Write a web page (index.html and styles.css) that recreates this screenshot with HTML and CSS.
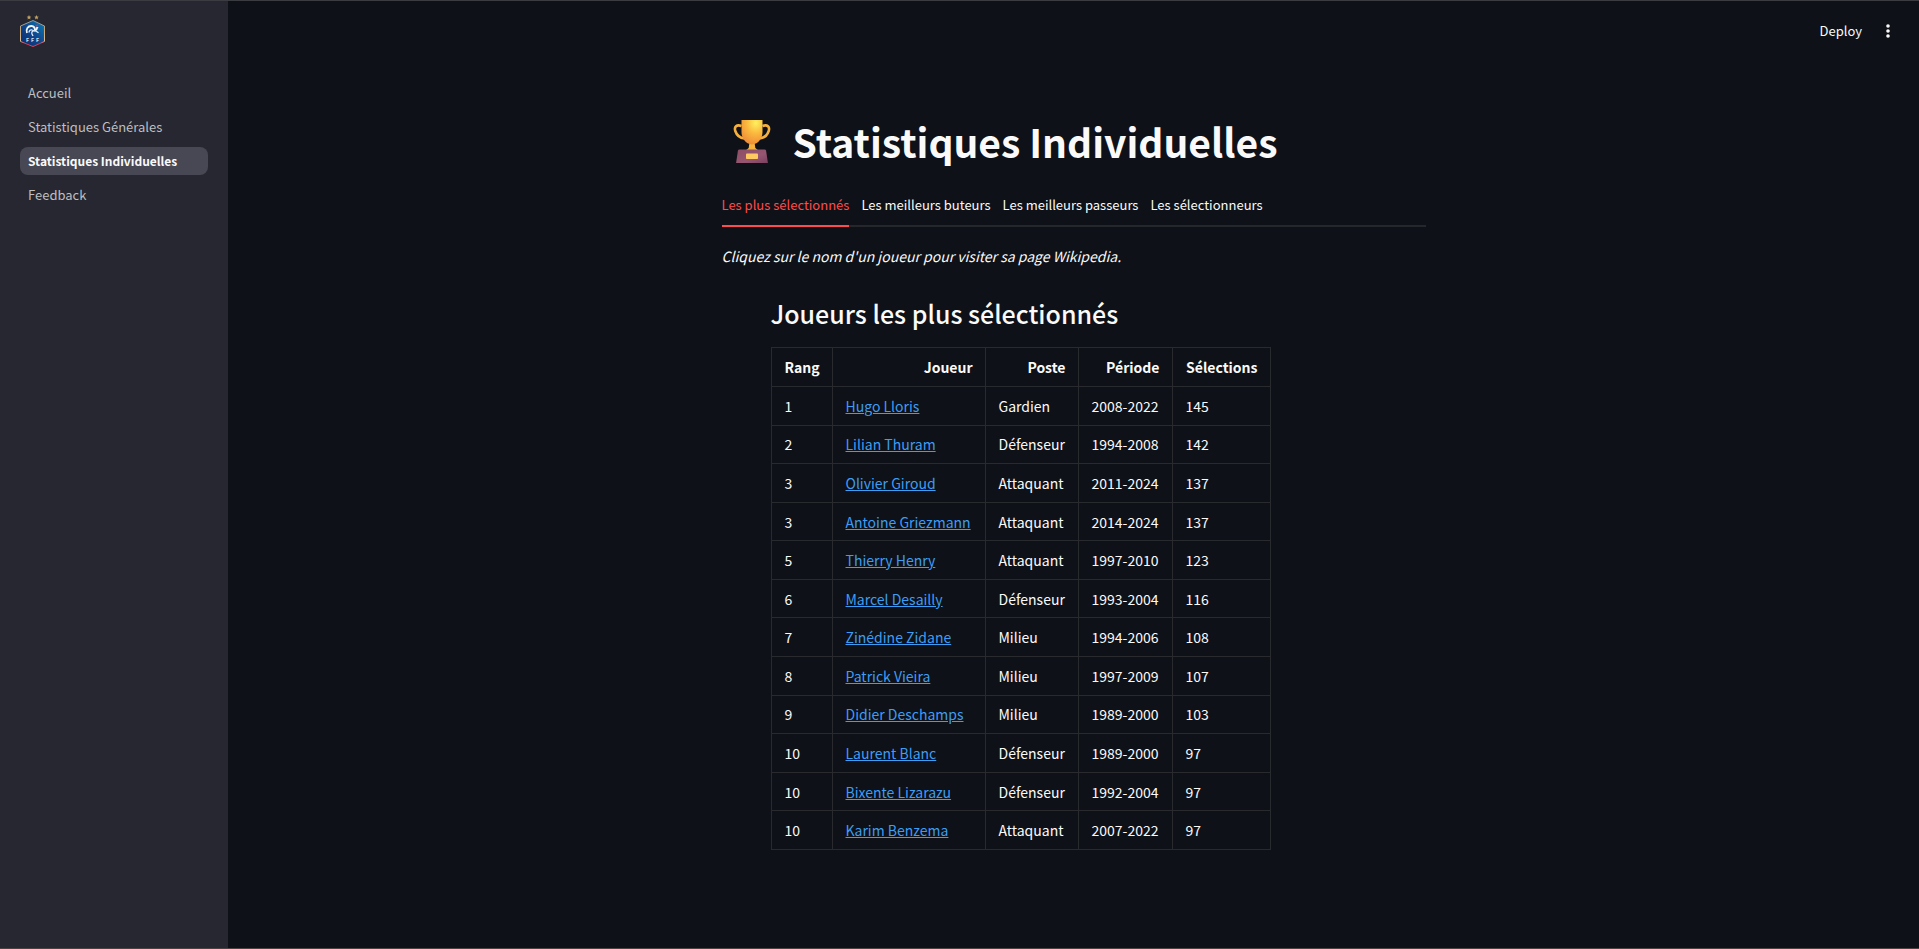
FILE: index.html
```html
<!DOCTYPE html>
<html lang="fr">
<head>
<meta charset="utf-8">
<meta name="viewport" content="width=device-width, initial-scale=1">
<title>Statistiques Individuelles</title>
<link rel="stylesheet" href="styles.css">
</head>
<body>
<div class="app">
  <aside class="sidebar">
    <a class="logo" href="#" aria-label="Accueil">
      <svg width="26" height="32" viewBox="0 0 26 32">
        <defs>
          <linearGradient id="shield" x1="0" y1="1" x2="1" y2="0"><stop offset="0" stop-color="#0c2a6a"/><stop offset=".5" stop-color="#10468c"/><stop offset="1" stop-color="#0b7fb8"/></linearGradient>
          <linearGradient id="rim" x1="0" y1="0" x2="0" y2="1"><stop offset="0" stop-color="#8a9aa0"/><stop offset=".4" stop-color="#c9a877"/><stop offset=".78" stop-color="#d8c0a0"/><stop offset=".88" stop-color="#dc3550"/><stop offset="1" stop-color="#e2405a"/></linearGradient>
        </defs>
        <path d="M9 0l.7 1.500 1.600.2-1.200 1.100.3 1.600L9 3.600l-1.400.8.3-1.600-1.200-1.100 1.600-.2zM16.500 0l.7 1.500 1.600.2-1.200 1.100.3 1.600-1.400-.8-1.400.8.3-1.600-1.200-1.100 1.600-.2z" fill="#c0a062"/>
        <path d="M13 5.500L24.500 11v15.500L13 31.500 .5 26.500V11z" fill="url(#shield)" stroke="url(#rim)"/>
        <path d="M7 18C5.500 14 8 10.800 11.500 11c2.500.1 3.500 2.500 3.500 4.500 1.300-.3 2-1.500 2.200-3.500" fill="none" stroke="#eef4fa" stroke-width="1.800"/>
        <path d="M9 17.500c0-2 1.500-3.200 3.500-2.500M15 15.500l3.500 2.300M14 15.500c-2 .5-2.500 1.700-2 3.500l1 2" fill="none" stroke="#e4edf6" stroke-width="1.300"/>
        <path d="M16.500 11.500l2.300.9-1.600.7z" fill="#eef4fa"/>
        <path d="M15.300 11l.3-1.600 1.200.5.8-.9.4 1.700-1.300.7z" fill="#d52c50"/>
        <text x="6 11 16" y="27" class="logo-text">FFF</text>
      </svg>
    </a>
    <nav class="nav">
      <a class="nav-item" href="#">Accueil</a>
      <a class="nav-item" href="#">Statistiques Générales</a>
      <a class="nav-item nav-item-active" href="#" aria-current="page">Statistiques Individuelles</a>
      <a class="nav-item" href="#">Feedback</a>
    </nav>
  </aside>
  <div class="page">
    <header class="toolbar">
      <button class="deploy" type="button">Deploy</button>
      <button class="menu" type="button" aria-label="Menu">
        <svg width="16" height="16" viewBox="0 0 16 16" fill="#fafafa"><circle cx="8" cy="3" r="1.800"/><circle cx="8" cy="8" r="1.800"/><circle cx="8" cy="13" r="1.800"/></svg>
      </button>
    </header>
    <main class="content">
      <h1 class="title">
        <svg class="trophy" width="44" height="44" viewBox="0 0 44 44" aria-hidden="true">
          <defs>
            <radialGradient id="cup" cx=".68" cy=".12" r=".95"><stop offset="0" stop-color="#fff05e"/><stop offset=".45" stop-color="#fbb93e"/><stop offset="1" stop-color="#ed8738"/></radialGradient>
            <linearGradient id="base" x1="0" y1="0" x2="1" y2="1"><stop offset="0" stop-color="#8d4d63"/><stop offset=".6" stop-color="#965671"/><stop offset="1" stop-color="#79405f"/></linearGradient>
          </defs>
          <path d="M10 7C5 5 2.500 8 3.800 12s4.700 7 9.200 7.500M31 7c5-2 7.500 1 6.200 5s-4.700 7-9.200 7.500" transform="translate(1.500 0)" fill="none" stroke="#f5af3d" stroke-width="2.600"/>
          <path d="M19.500 23h5l.8 6 3.200 2.500v2h-13v-2l3.200-2.500z" fill="#f6b43e"/>
          <path d="M11.500 1h21v12c0 6-4 12-10.500 12.500C15.500 25 11.500 19 11.500 13z" fill="url(#cup)"/>
          <path d="M9.500 30.500h25q1.300 0 1.600 1.300l1.800 12.200H6.100l1.800-12.200q.3-1.300 1.600-1.300z" fill="url(#base)"/>
          <rect x="16" y="34.500" width="12" height="5.500" rx=".8" fill="#fdc960"/>
        </svg>
        <span>Statistiques Individuelles</span>
      </h1>
      <div class="tabs" role="tablist">
        <button class="tab tab-active" role="tab" aria-selected="true" type="button">Les plus sélectionnés</button>
        <button class="tab" role="tab" aria-selected="false" type="button">Les meilleurs buteurs</button>
        <button class="tab" role="tab" aria-selected="false" type="button">Les meilleurs passeurs</button>
        <button class="tab" role="tab" aria-selected="false" type="button">Les sélectionneurs</button>
      </div>
      <p class="hint">Cliquez sur le nom d'un joueur pour visiter sa page Wikipedia.</p>
      <section class="ranking">
        <h2 class="subtitle">Joueurs les plus sélectionnés</h2>
        <table class="table">
          <colgroup><col class="col-rank"><col class="col-player"><col class="col-role"><col class="col-years"><col class="col-caps"></colgroup>
          <thead><tr><th>Rang</th><th>Joueur</th><th>Poste</th><th>Période</th><th>Sélections</th></tr></thead>
          <tbody>
            <tr><td>1</td><td><a href="#">Hugo Lloris</a></td><td>Gardien</td><td>2008-2022</td><td>145</td></tr>
            <tr><td>2</td><td><a href="#">Lilian Thuram</a></td><td>Défenseur</td><td>1994-2008</td><td>142</td></tr>
            <tr><td>3</td><td><a href="#">Olivier Giroud</a></td><td>Attaquant</td><td>2011-2024</td><td>137</td></tr>
            <tr><td>3</td><td><a href="#">Antoine Griezmann</a></td><td>Attaquant</td><td>2014-2024</td><td>137</td></tr>
            <tr><td>5</td><td><a href="#">Thierry Henry</a></td><td>Attaquant</td><td>1997-2010</td><td>123</td></tr>
            <tr><td>6</td><td><a href="#">Marcel Desailly</a></td><td>Défenseur</td><td>1993-2004</td><td>116</td></tr>
            <tr><td>7</td><td><a href="#">Zinédine Zidane</a></td><td>Milieu</td><td>1994-2006</td><td>108</td></tr>
            <tr><td>8</td><td><a href="#">Patrick Vieira</a></td><td>Milieu</td><td>1997-2009</td><td>107</td></tr>
            <tr><td>9</td><td><a href="#">Didier Deschamps</a></td><td>Milieu</td><td>1989-2000</td><td>103</td></tr>
            <tr><td>10</td><td><a href="#">Laurent Blanc</a></td><td>Défenseur</td><td>1989-2000</td><td>97</td></tr>
            <tr><td>10</td><td><a href="#">Bixente Lizarazu</a></td><td>Défenseur</td><td>1992-2004</td><td>97</td></tr>
            <tr><td>10</td><td><a href="#">Karim Benzema</a></td><td>Attaquant</td><td>2007-2022</td><td>97</td></tr>
          </tbody>
        </table>
      </section>
    </main>
  </div>
</div>
</body>
</html>
```
FILE: styles.css
```css
* { box-sizing: border-box; }

body {
  margin: 0;
  background: #0e1117;
  color: #fafafa;
  font-family: "Noto Sans CJK SC", "Noto Sans", sans-serif;
  font-size: 14px;
  line-height: 24px;
}

button {
  padding: 0;
  border: 0;
  background: none;
  color: inherit;
  font: inherit;
}

.app {
  display: flex;
  min-height: 100vh;
  border-top: 1px solid #3b3c41;
  border-bottom: 1px solid #4a4343;
}

.sidebar {
  flex: 0 0 228px;
  padding: 14px 20px;
  background: #262730;
}

.logo { display: block; height: 32px; }
.logo svg { display: block; }
.logo-text { font-size: 5px; font-weight: 700; fill: #dfe6f2; }

.nav {
  display: flex;
  flex-direction: column;
  gap: 6px;
  margin-top: 32px;
}

.nav-item {
  padding: 2px 8px;
  border-radius: 8px;
  color: #bebec1;
  font-size: 13px;
  text-decoration: none;
}

.nav-item-active {
  background: #474853;
  color: #fafafa;
  font-size: 12px;
  font-weight: 700;
}

.page { flex: 1; min-width: 0; }

.toolbar {
  display: flex;
  align-items: center;
  justify-content: flex-end;
  gap: 18px;
  height: 60px;
  padding-right: 23px;
}

.deploy { font-size: 13px; }
.menu { display: flex; }

.content {
  max-width: 704px;
  margin: 0 auto;
  padding: 50px 0 80px;
}

.title {
  display: flex;
  align-items: center;
  gap: 19px;
  margin: 0;
  padding-left: 8px;
  font-size: 39px;
  font-weight: 700;
  line-height: 60px;
}

.trophy { flex: none; }

.tabs {
  display: flex;
  gap: 12px;
  margin-top: 14px;
  border-bottom: 2px solid #26272b;
}

.tab {
  margin-bottom: -2px;
  border-bottom: 2px solid transparent;
  font-size: 13px;
  line-height: 40px;
}

.tab-active { border-color: #ff4b4b; color: #ff4b4b; }

.hint { margin: 17px 0 0; font-style: italic; }

.ranking { padding: 25px 48px 0 49px; }

.subtitle {
  margin: 0;
  font-size: 25px;
  font-weight: 500;
  line-height: 40px;
}

.table {
  height: 503px;
  margin-top: 14px;
  border-collapse: collapse;
}

.table th,
.table td {
  padding: 6px 12px 6px 13px;
  border: 1px solid #292a2d;
  text-align: left;
}

.table th { padding: 7px 12px; font-weight: 700; text-align: right; }
.table a { color: #3d9df3; text-decoration: underline; }

.col-rank { width: 61px; }
.col-player { width: 153px; }
.col-role { width: 93px; }
.col-years { width: 94px; }
.col-caps { width: 98px; }
```
